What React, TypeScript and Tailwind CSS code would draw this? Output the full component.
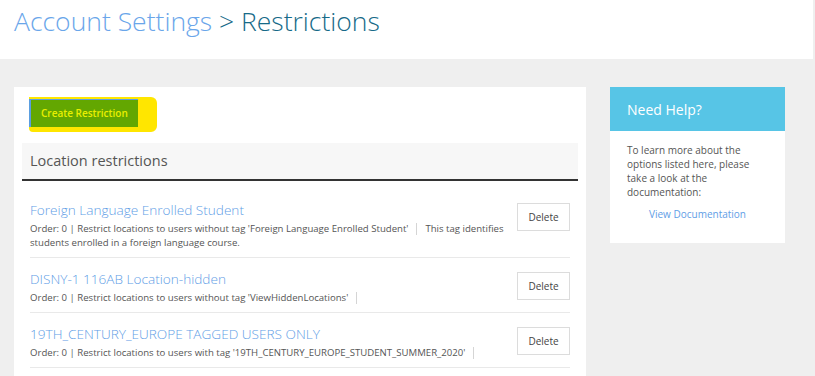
import React from 'react';

interface Restriction {
  id: number;
  name: string;
  rule: string;
  note?: string;
}

const restrictions: Restriction[] = [
  {
    id: 1,
    name: 'Foreign Language Enrolled Student',
    rule: "Order: 0 | Restrict locations to users without tag 'Foreign Language Enrolled Student'",
    note: 'This tag identifies students enrolled in a foreign language course.',
  },
  {
    id: 2,
    name: 'DISNY-1 116AB Location-hidden',
    rule: "Order: 0 | Restrict locations to users without tag 'ViewHiddenLocations'",
  },
  {
    id: 3,
    name: '19TH_CENTURY_EUROPE TAGGED USERS ONLY',
    rule: "Order: 0 | Restrict locations to users with tag '19TH_CENTURY_EUROPE_STUDENT_SUMMER_2020'",
  },
];

const RestrictionRow: React.FC<{ item: Restriction }> = ({ item }) => (
  <div className="flex items-start border-b border-[#e9e9e9] pt-[11px] pb-[7px]">
    <div className="flex-1 pr-[10px]">
      <div className="text-[13.6px] leading-[20px] font-light text-[#5f9ee6]">{item.name}</div>
      <div className="mt-[2px] text-[9.6px] leading-[14px] text-[#555]">
        <span>{item.rule}</span>
        <span className="inline-block h-[12px] border-l border-[#d5d5d5] mx-[8px] align-middle"></span>
        {item.note && <span>{item.note}</span>}
      </div>
    </div>
    <button className="mt-[3px] w-[53px] h-[28px] border border-[#dcdcdc] bg-white text-[10px] text-[#444]">
      Delete
    </button>
  </div>
);

const App: React.FC = () => {
  return (
    <div className="w-[815px] h-[376px] overflow-hidden bg-[#efefef] font-['Open_Sans',sans-serif]">
      <div className="w-[813px] h-[59px] bg-white pl-[14px] pt-[3px]">
        <h1 className="text-[26.5px] leading-[36px] font-light">
          <span className="text-[#6aa6ea]">Account Settings</span>
          <span className="text-[#166a88]"> &gt; Restrictions</span>
        </h1>
      </div>

      <div className="flex items-start pt-[28px] pl-[14px]">
        <div className="w-[572px] h-[300px] bg-white pt-[10px] px-[8px]">
          <div className="pl-[7px]">
            <span className="inline-block bg-[#ffe600] pt-[2px] pb-[5px] pr-[19px] rounded-r-[6px] rounded-bl-[4px]">
              <button className="block h-[28px] px-[10px] bg-[#63a701] border-l-2 border-t border-[#5b9ee0] text-[10px] font-semibold text-[#e9ef00]">
                Create Restriction
              </button>
            </span>
          </div>

          <div className="mt-[11px] h-[38px] bg-[#f7f7f7] border-b-2 border-[#333] px-[8px] flex items-center">
            <span className="text-[14.5px] text-[#555]">Location restrictions</span>
          </div>

          <div className="mx-[8px] mt-[8px]">
            {restrictions.map(r => (
              <RestrictionRow key={r.id} item={r} />
            ))}
          </div>
        </div>

        <div className="ml-[24px] w-[175px] h-[156px] bg-white">
          <div className="h-[44px] bg-[#57c5e6] px-[17px] flex items-center">
            <span className="text-[14px] text-white">Need Help?</span>
          </div>
          <div className="px-[17px] pt-[12px] text-[10px] leading-[14px] text-[#555]">
            <p>To learn more about the options listed here, please take a look at the documentation:</p>
            <p className="mt-[8px] text-center text-[#5f9ee6]">View Documentation</p>
          </div>
        </div>
      </div>
    </div>
  );
};

export default App;
